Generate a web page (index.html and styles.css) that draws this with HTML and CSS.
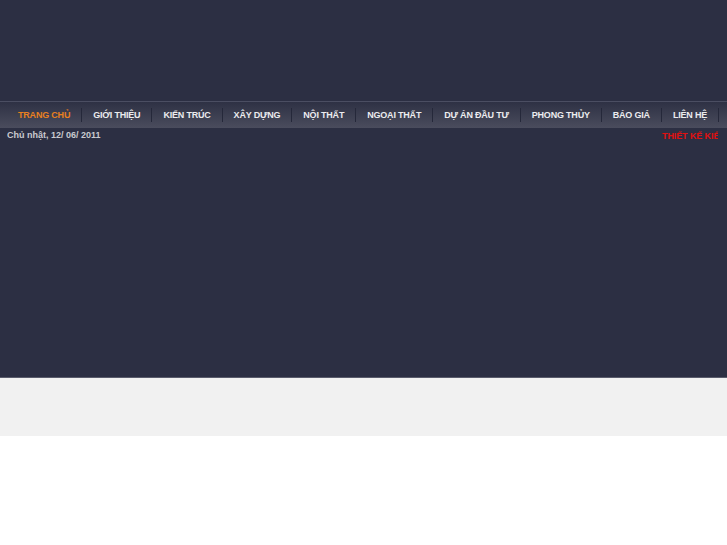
FILE: index.html
```html
<!DOCTYPE html>
<html>
<head>
<meta charset="utf-8">
<link rel="stylesheet" href="styles.css">
</head>
<body>
<div class="page">
  <div class="header"></div>
  <nav class="nav">
    <a class="item active">TRANG CHỦ</a>
    <a class="item">GIỚI THIỆU</a>
    <a class="item">KIẾN TRÚC</a>
    <a class="item">XÂY DỰNG</a>
    <a class="item">NỘI THẤT</a>
    <a class="item">NGOẠI THẤT</a>
    <a class="item">DỰ ÁN ĐẦU TƯ</a>
    <a class="item">PHONG THỦY</a>
    <a class="item">BÁO GIÁ</a>
    <a class="item last">LIÊN HỆ</a>
  </nav>
  <div class="infobar">
    <span class="date">Chủ nhật, 12/ 06/ 2011</span>
    <div class="ticker">THIẾT KẾ KIẾN TRÚC</div>
  </div>
  <div class="strip"></div>
</div>
</body>
</html>
```
FILE: styles.css
```css
html, body {
  margin: 0;
  padding: 0;
  background: #ffffff;
}
.page {
  font-family: "Liberation Sans", Arial, sans-serif;
}
.header {
  height: 101px;
  background: #2c2f43;
}
.nav {
  display: flex;
  align-items: center;
  border-top: 1px solid #4b4e62;
  background: linear-gradient(#2e3144, #4a4c5d);
  padding-left: 7px;
  box-sizing: border-box;
  height: 27px;
}
.item {
  display: block;
  font-size: 9px;
  font-weight: bold;
  letter-spacing: -0.2px;
  color: #ececef;
  padding: 0 11px;
  line-height: 14px;
  border-right: 1px solid #25283a;
  white-space: nowrap;
}
.item.active {
  color: #e9801f;
}
.infobar {
  display: flex;
  justify-content: space-between;
  align-items: flex-start;
  height: 249px;
  background: #2c2f43;
  padding: 1px 9px 0 7px;
  box-sizing: border-box;
}
.date {
  font-size: 9px;
  font-weight: bold;
  color: #c9cad0;
  line-height: 12px;
}
.ticker {
  width: 56px;
  overflow: hidden;
  white-space: nowrap;
  margin-top: 1px;
  font-size: 9px;
  font-weight: bold;
  letter-spacing: -0.1px;
  color: #e01010;
  line-height: 12px;
}
.strip {
  height: 58px;
  background: #f1f1f1;
  border-top: 1px solid #5a5c6c;
}
```
